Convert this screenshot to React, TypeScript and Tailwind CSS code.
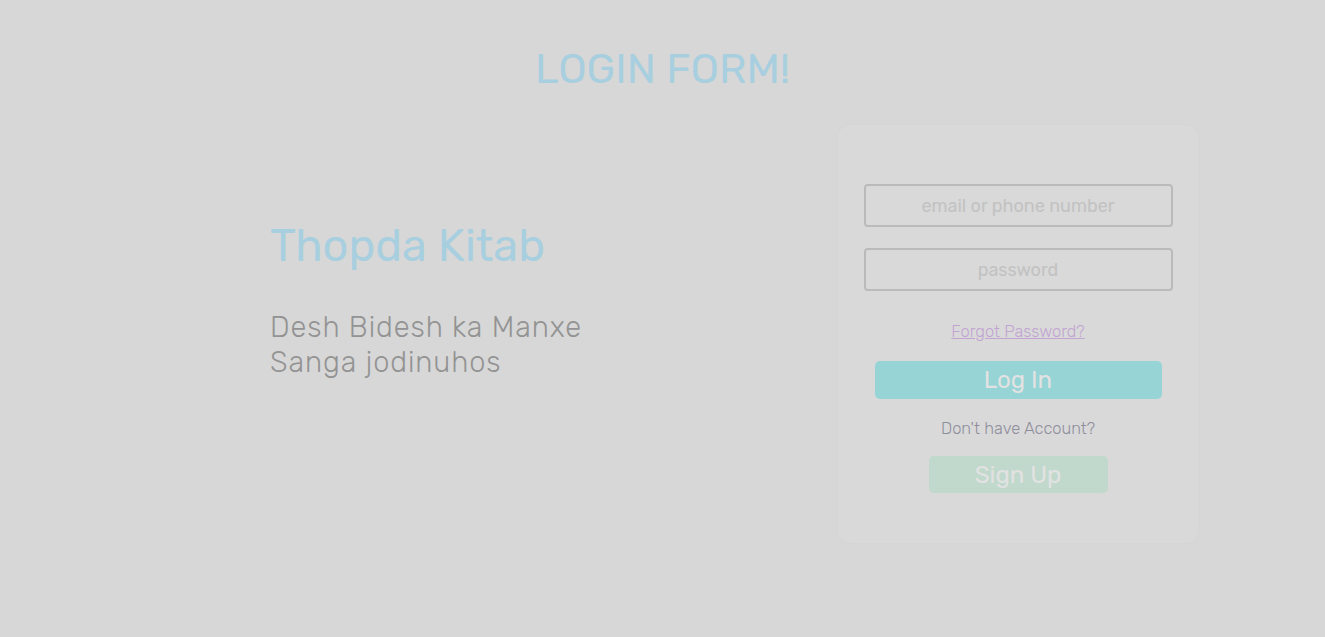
export default function App() {
  const font = { fontFamily: 'Rubik, Roboto, "Open Sans", sans-serif' };
  return (
    <div className="min-h-[637px] w-full bg-[#d7d7d7]" style={font}>
      <h1 className="pt-[44px] text-center text-[42px] leading-[50px] font-normal text-[#a8cfdf]">LOGIN FORM!</h1>

      <div className="ml-[270px] mt-[31px] flex w-[928px] justify-between">
        <div className="pt-[95px]">
          <h2 className="text-[45px] leading-[52px] font-normal text-[#a8cfdf]">Thopda Kitab</h2>
          <p className="mt-[38px] text-[29px] leading-[35px] font-light tracking-[0.9px] text-[#939393]">
            Desh Bidesh ka Manxe
            <br />
            Sanga jodinuhos
          </p>
        </div>

        <div className="flex h-[418px] w-[360px] flex-col items-center rounded-xl bg-[#d9d9d9] px-[26px] pt-[59px] shadow-[0_0_3px_rgba(0,0,0,0.03)]">
          <input
            placeholder="email or phone number"
            className="h-[43px] w-[309px] rounded-[4px] border-2 border-[#bababa] bg-transparent text-center text-[18px] text-[#9a9a9a] outline-none placeholder:text-[#c2c2c2]"
          />
          <input
            type="password"
            placeholder="password"
            className="mt-[21px] h-[43px] w-[309px] rounded-[4px] border-2 border-[#bababa] bg-transparent text-center text-[18px] text-[#9a9a9a] outline-none placeholder:text-[#c2c2c2]"
          />
          <a href="#" className="mt-[31px] text-[16.5px] leading-[20px] font-light text-[#c2a4d2] underline">
            Forgot Password?
          </a>
          <button className="mt-[19px] h-[38px] w-[287px] rounded-[5px] bg-[#96d4d6] text-[24px] text-[#e2e2e2]">Log In</button>
          <p className="mt-[20px] text-[16.5px] leading-[20px] font-light text-[#8e8e9c]">Don't have Account?</p>
          <button className="mt-[17px] h-[37px] w-[179px] rounded-[5px] bg-[#c1d9cc] text-[24px] text-[#e2e2e2]">Sign Up</button>
        </div>
      </div>
    </div>
  );
}
